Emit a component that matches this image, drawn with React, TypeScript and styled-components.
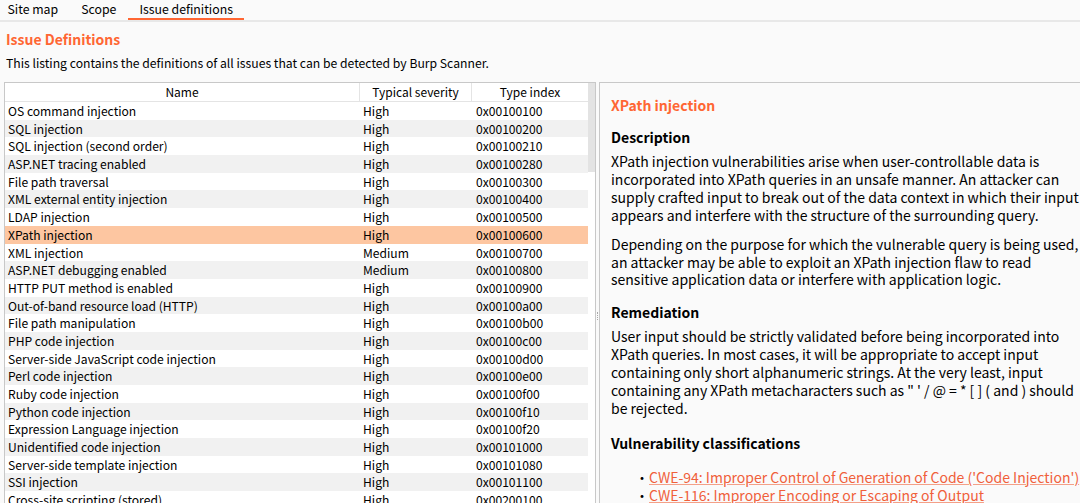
import React from 'react';
import styled, { createGlobalStyle } from 'styled-components';

const FONT = `"Noto Sans CJK SC", "Noto Sans", sans-serif`;
const ORANGE = '#ff6633';

const Global = createGlobalStyle`
  html, body { margin: 0; padding: 0; background: #fafafa; overflow: hidden; }
  body { font-family: ${FONT}; color: #000; }
  * { box-sizing: border-box; }
`;

const Page = styled.div`
  width: 1080px;
  height: 503px;
  display: flex;
  flex-direction: column;
  overflow: hidden;
  background: #fafafa;
`;

const TabBar = styled.div`
  display: flex;
  height: 22px;
  border-bottom: 2px solid #e8e8e8;
  margin-left: -4px;
`;

const Tab = styled.div<{ $active?: boolean }>`
  padding: 0 11.5px;
  height: 20px;
  font-size: 12.3px;
  line-height: 19px;
  color: #000;
  border-bottom: 2px solid ${(p) => (p.$active ? ORANGE : 'transparent')};
`;

const Header = styled.div`
  padding: 8px 6px 0;
`;

const PageTitle = styled.h1`
  margin: 0;
  font-size: 14px;
  line-height: 18px;
  font-weight: bold;
  color: ${ORANGE};
`;

const Intro = styled.p`
  margin: 7px 0 0;
  font-size: 12.2px;
  line-height: 16px;
`;

const Main = styled.div`
  flex: 1;
  display: flex;
  margin-top: 11px;
  min-height: 0;
`;

const TablePanel = styled.div`
  margin-left: 4px;
  width: 592px;
  display: flex;
  border: 1px solid #c8c8c8;
  border-bottom: none;
  background: #fff;
`;

const TableBody = styled.div`
  flex: 1;
  display: flex;
  flex-direction: column;
`;

const Grid = styled.div<{ $bg?: string }>`
  display: grid;
  grid-template-columns: 355px 112px 1fr;
  background: ${(p) => p.$bg || '#fff'};
`;

const HeadRow = styled(Grid)`
  height: 19px;
  border-bottom: 1px solid #e4e4e4;
`;

const HeadCell = styled.div<{ $last?: boolean }>`
  font-size: 12px;
  line-height: 18px;
  text-align: center;
  border-right: ${(p) => (p.$last ? 'none' : '1px solid #e4e4e4')};
`;

const Row = styled(Grid)`
  height: 17.7px;
`;

const Cell = styled.div<{ $pad?: number }>`
  font-size: 12.1px;
  line-height: 17.7px;
  padding-left: ${(p) => p.$pad ?? 3}px;
  white-space: nowrap;
  overflow: hidden;
`;

const ScrollTrack = styled.div`
  width: 7px;
  background: #fff;
`;

const ScrollThumb = styled.div`
  height: 89px;
  background: #e3e3e3;
`;

const Splitter = styled.div`
  width: 3px;
  display: flex;
  flex-direction: column;
  align-items: center;
  justify-content: center;
  padding-top: 46px;
`;

const Grip = styled.div`
  width: 1px;
  height: 8px;
  border-left: 1px dotted #a8a8a8;
`;

const DetailPanel = styled.div`
  flex: 1;
  border-top: 1px solid #c8c8c8;
  border-left: 1px solid #c8c8c8;
  padding: 13px 0 0 11px;
  background: #fafafa;
  overflow: hidden;
`;

const IssueTitle = styled.h2`
  margin: 0 0 14px;
  font-size: 14px;
  line-height: 18px;
  font-weight: bold;
  color: ${ORANGE};
`;

const SectionTitle = styled.h3`
  margin: 0 0 7px;
  font-size: 14px;
  line-height: 18px;
  font-weight: bold;
`;

const Para = styled.p<{ $mb?: number }>`
  margin: 0 0 ${(p) => p.$mb ?? 14}px;
  font-size: 14px;
  line-height: 17.9px;
  white-space: nowrap;
`;

const Line = styled.span`
  display: block;
`;

const LinkList = styled.ul`
  margin: 16px 0 0;
  padding-left: 24px;
  list-style: none;
`;

const LinkItem = styled.li`
  font-size: 14px;
  line-height: 18px;
  white-space: nowrap;
  &::before {
    content: '•';
    color: #000;
    margin-right: 0;
  }
`;

const Link = styled.a`
  color: #f0603a;
  text-decoration: underline;
  text-decoration-color: #f4a088;
`;

type Issue = [string, string, string];

const issues: Issue[] = [
  ['OS command injection', 'High', '0x00100100'],
  ['SQL injection', 'High', '0x00100200'],
  ['SQL injection (second order)', 'High', '0x00100210'],
  ['ASP.NET tracing enabled', 'High', '0x00100280'],
  ['File path traversal', 'High', '0x00100300'],
  ['XML external entity injection', 'High', '0x00100400'],
  ['LDAP injection', 'High', '0x00100500'],
  ['XPath injection', 'High', '0x00100600'],
  ['XML injection', 'Medium', '0x00100700'],
  ['ASP.NET debugging enabled', 'Medium', '0x00100800'],
  ['HTTP PUT method is enabled', 'High', '0x00100900'],
  ['Out-of-band resource load (HTTP)', 'High', '0x00100a00'],
  ['File path manipulation', 'High', '0x00100b00'],
  ['PHP code injection', 'High', '0x00100c00'],
  ['Server-side JavaScript code injection', 'High', '0x00100d00'],
  ['Perl code injection', 'High', '0x00100e00'],
  ['Ruby code injection', 'High', '0x00100f00'],
  ['Python code injection', 'High', '0x00100f10'],
  ['Expression Language injection', 'High', '0x00100f20'],
  ['Unidentified code injection', 'High', '0x00101000'],
  ['Server-side template injection', 'High', '0x00101080'],
  ['SSI injection', 'High', '0x00101100'],
  ['Cross-site scripting (stored)', 'High', '0x00200100'],
];

const SELECTED = 7;

export default function App() {
  return (
    <Page>
      <Global />
      <TabBar>
        <Tab>Site map</Tab>
        <Tab>Scope</Tab>
        <Tab $active>Issue definitions</Tab>
      </TabBar>
      <Header>
        <PageTitle>Issue Definitions</PageTitle>
        <Intro>This listing contains the definitions of all issues that can be detected by Burp Scanner.</Intro>
      </Header>
      <Main>
        <TablePanel>
          <TableBody>
            <HeadRow>
              <HeadCell>Name</HeadCell>
              <HeadCell>Typical severity</HeadCell>
              <HeadCell $last>Type index</HeadCell>
            </HeadRow>
            {issues.map(([name, sev, idx], i) => (
              <Row
                key={idx}
                $bg={i === SELECTED ? '#fdc6a1' : i % 2 === 1 ? '#f1f1f1' : '#fff'}
              >
                <Cell>{name}</Cell>
                <Cell>{sev}</Cell>
                <Cell $pad={4}>{idx}</Cell>
              </Row>
            ))}
          </TableBody>
          <ScrollTrack>
            <ScrollThumb />
          </ScrollTrack>
        </TablePanel>
        <Splitter>
          <Grip />
        </Splitter>
        <DetailPanel>
          <IssueTitle>XPath injection</IssueTitle>
          <SectionTitle>Description</SectionTitle>
          <Para $mb={11}>
            <Line>XPath injection vulnerabilities arise when user-controllable data is</Line>
            <Line>incorporated into XPath queries in an unsafe manner. An attacker can</Line>
            <Line>supply crafted input to break out of the data context in which their input</Line>
            <Line>appears and interfere with the structure of the surrounding query.</Line>
          </Para>
          <Para>
            <Line>Depending on the purpose for which the vulnerable query is being used,</Line>
            <Line>an attacker may be able to exploit an XPath injection flaw to read</Line>
            <Line>sensitive application data or interfere with application logic.</Line>
          </Para>
          <SectionTitle>Remediation</SectionTitle>
          <Para $mb={16}>
            <Line>User input should be strictly validated before being incorporated into</Line>
            <Line>XPath queries. In most cases, it will be appropriate to accept input</Line>
            <Line>containing only short alphanumeric strings. At the very least, input</Line>
            <Line>containing any XPath metacharacters such as " ' / @ = * [ ] ( and ) should</Line>
            <Line>be rejected.</Line>
          </Para>
          <SectionTitle>Vulnerability classifications</SectionTitle>
          <LinkList>
            <LinkItem>
              <Link>CWE-94: Improper Control of Generation of Code ('Code Injection')</Link>
            </LinkItem>
            <LinkItem>
              <Link>CWE-116: Improper Encoding or Escaping of Output</Link>
            </LinkItem>
          </LinkList>
        </DetailPanel>
      </Main>
    </Page>
  );
}
